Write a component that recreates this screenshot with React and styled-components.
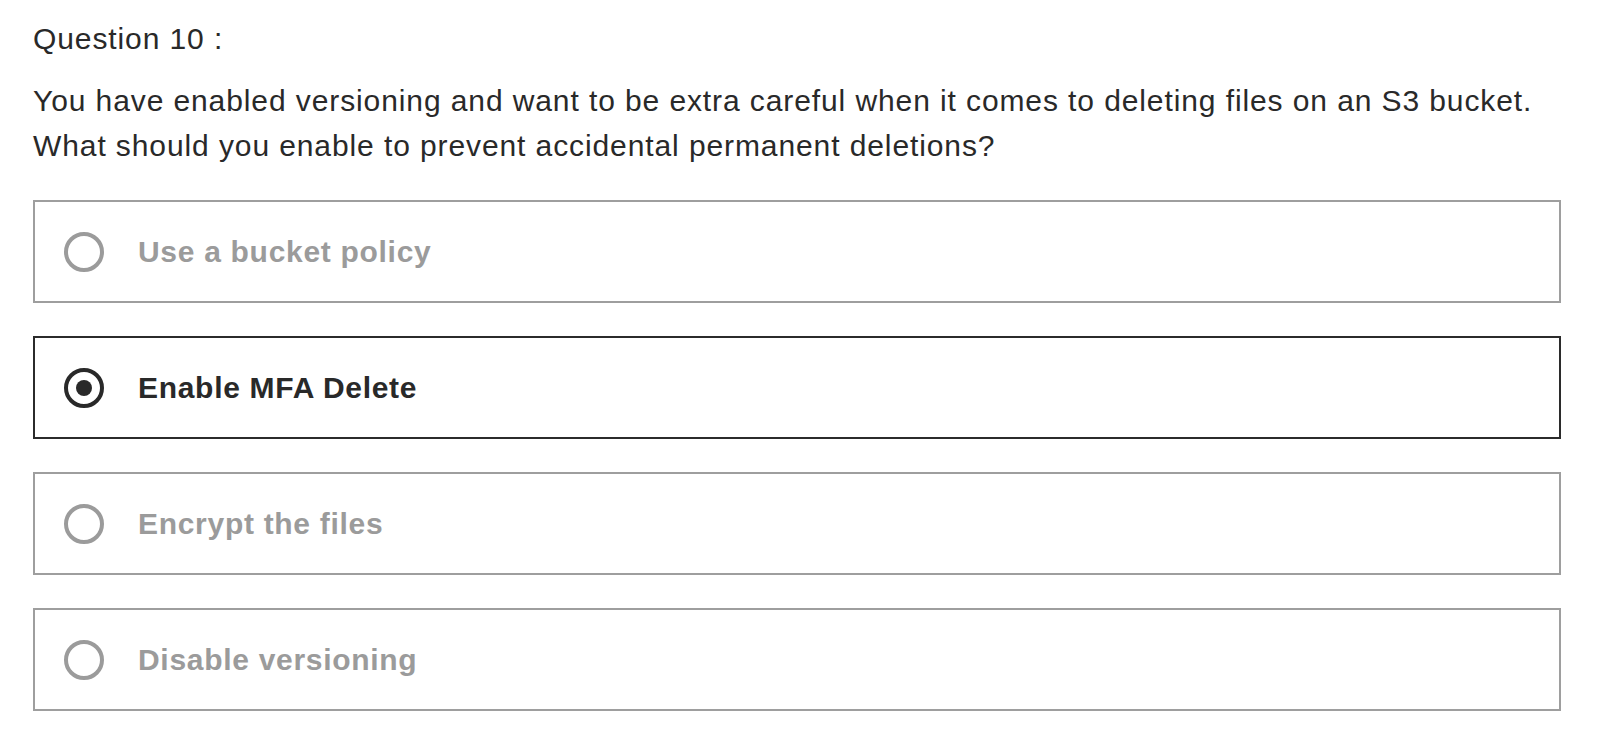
import React, { useState } from "react";
import styled, { createGlobalStyle } from "styled-components";

const GlobalStyle = createGlobalStyle`
  html, body {
    margin: 0;
    padding: 0;
    background: #fff;
  }
  body {
    font-family: "Liberation Sans", Arial, sans-serif;
    color: #292929;
    -webkit-font-smoothing: antialiased;
  }
`;

const Quiz = styled.section`
  padding: 16px 59px 40px 33px;
`;

const Label = styled.div`
  font-size: 30px;
  line-height: 45px;
  letter-spacing: 0.9px;
`;

const Prompt = styled.p`
  margin: 17px 0 32px;
  font-size: 30px;
  line-height: 45px;
  letter-spacing: 0.9px;
  white-space: nowrap;
`;

const Options = styled.div`
  display: flex;
  flex-direction: column;
  gap: 33px;
`;

const Option = styled.label`
  display: flex;
  align-items: center;
  height: 99px;
  padding: 0 29px;
  border: 2px solid ${(p) => (p.$checked ? "#2b2b2b" : "#9e9e9e")};
  cursor: pointer;
`;

const Radio = styled.span`
  box-sizing: border-box;
  flex: none;
  width: 40px;
  height: 40px;
  border-radius: 50%;
  border: 4px solid ${(p) => (p.$checked ? "#292929" : "#9b9b9b")};
  display: flex;
  align-items: center;
  justify-content: center;
  margin-right: 34px;

  &::after {
    content: "";
    width: 16px;
    height: 16px;
    border-radius: 50%;
    background: #292929;
    display: ${(p) => (p.$checked ? "block" : "none")};
  }
`;

const OptionText = styled.span`
  font-size: 30px;
  font-weight: 700;
  letter-spacing: 0.7px;
  color: ${(p) => (p.$checked ? "#292929" : "#9b9b9b")};
`;

const answers = [
  "Use a bucket policy",
  "Enable MFA Delete",
  "Encrypt the files",
  "Disable versioning",
];

export default function App() {
  const [picked, setPicked] = useState(1);

  return (
    <>
      <GlobalStyle />
      <Quiz>
        <Label>Question 10 :</Label>
        <Prompt>
          You have enabled versioning and want to be extra careful when it comes to deleting files on an S3 bucket.
          <br />
          What should you enable to prevent accidental permanent deletions?
        </Prompt>
        <Options>
          {answers.map((a, i) => (
            <Option key={a} $checked={picked === i} onClick={() => setPicked(i)}>
              <Radio $checked={picked === i} />
              <OptionText $checked={picked === i}>{a}</OptionText>
            </Option>
          ))}
        </Options>
      </Quiz>
    </>
  );
}
